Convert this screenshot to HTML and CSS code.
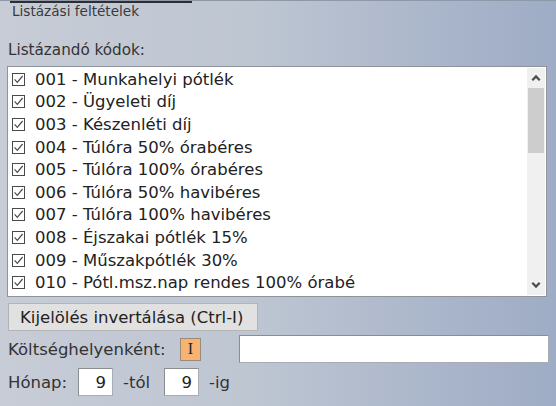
FILE: index.html
```html
<!DOCTYPE html>
<html>
<head>
<meta charset="utf-8">
<link rel="stylesheet" href="styles.css">
</head>
<body>
<div class="panel">
  <div class="tabline"></div>
  <div class="title">Listázási feltételek</div>
  <div class="label">Listázandó kódok:</div>
  <div class="listbox">
    <ul class="items">
      <li><svg class="cb" viewBox="0 0 13 13"><rect x="0.5" y="0.5" width="12" height="12" fill="#fff" stroke="#4a4a4a"/><path d="M2.6 6.4 L5.3 9.4 L10.6 3" fill="none" stroke="#4a4a4a" stroke-width="1.2"/></svg>001 - Munkahelyi pótlék</li>
      <li><svg class="cb" viewBox="0 0 13 13"><rect x="0.5" y="0.5" width="12" height="12" fill="#fff" stroke="#4a4a4a"/><path d="M2.6 6.4 L5.3 9.4 L10.6 3" fill="none" stroke="#4a4a4a" stroke-width="1.2"/></svg>002 - Ügyeleti díj</li>
      <li><svg class="cb" viewBox="0 0 13 13"><rect x="0.5" y="0.5" width="12" height="12" fill="#fff" stroke="#4a4a4a"/><path d="M2.6 6.4 L5.3 9.4 L10.6 3" fill="none" stroke="#4a4a4a" stroke-width="1.2"/></svg>003 - Készenléti díj</li>
      <li><svg class="cb" viewBox="0 0 13 13"><rect x="0.5" y="0.5" width="12" height="12" fill="#fff" stroke="#4a4a4a"/><path d="M2.6 6.4 L5.3 9.4 L10.6 3" fill="none" stroke="#4a4a4a" stroke-width="1.2"/></svg>004 - Túlóra 50% órabéres</li>
      <li><svg class="cb" viewBox="0 0 13 13"><rect x="0.5" y="0.5" width="12" height="12" fill="#fff" stroke="#4a4a4a"/><path d="M2.6 6.4 L5.3 9.4 L10.6 3" fill="none" stroke="#4a4a4a" stroke-width="1.2"/></svg>005 - Túlóra 100% órabéres</li>
      <li><svg class="cb" viewBox="0 0 13 13"><rect x="0.5" y="0.5" width="12" height="12" fill="#fff" stroke="#4a4a4a"/><path d="M2.6 6.4 L5.3 9.4 L10.6 3" fill="none" stroke="#4a4a4a" stroke-width="1.2"/></svg>006 - Túlóra 50% havibéres</li>
      <li><svg class="cb" viewBox="0 0 13 13"><rect x="0.5" y="0.5" width="12" height="12" fill="#fff" stroke="#4a4a4a"/><path d="M2.6 6.4 L5.3 9.4 L10.6 3" fill="none" stroke="#4a4a4a" stroke-width="1.2"/></svg>007 - Túlóra 100% havibéres</li>
      <li><svg class="cb" viewBox="0 0 13 13"><rect x="0.5" y="0.5" width="12" height="12" fill="#fff" stroke="#4a4a4a"/><path d="M2.6 6.4 L5.3 9.4 L10.6 3" fill="none" stroke="#4a4a4a" stroke-width="1.2"/></svg>008 - Éjszakai pótlék 15%</li>
      <li><svg class="cb" viewBox="0 0 13 13"><rect x="0.5" y="0.5" width="12" height="12" fill="#fff" stroke="#4a4a4a"/><path d="M2.6 6.4 L5.3 9.4 L10.6 3" fill="none" stroke="#4a4a4a" stroke-width="1.2"/></svg>009 - Műszakpótlék 30%</li>
      <li><svg class="cb" viewBox="0 0 13 13"><rect x="0.5" y="0.5" width="12" height="12" fill="#fff" stroke="#4a4a4a"/><path d="M2.6 6.4 L5.3 9.4 L10.6 3" fill="none" stroke="#4a4a4a" stroke-width="1.2"/></svg>010 - Pótl.msz.nap rendes 100% órabé</li>
    </ul>
    <div class="scrollbar">
      <div class="arrow"><svg viewBox="0 0 10 8" width="10" height="8"><path d="M1.3 6.2 L5 2.4 L8.7 6.2" fill="none" stroke="#4d4d4d" stroke-width="2.2"/></svg></div>
      <div class="track"><div class="thumb"></div></div>
      <div class="arrow"><svg viewBox="0 0 10 8" width="10" height="8"><path d="M1.3 1.8 L5 5.6 L8.7 1.8" fill="none" stroke="#4d4d4d" stroke-width="2.2"/></svg></div>
    </div>
  </div>
  <div class="btnrow"><button class="btn">Kijelölés invertálása (Ctrl-I)</button></div>
  <div class="row row-cost">
    <span class="lbl cost-lbl">Költséghelyenként:</span>
    <span class="flag">I</span>
    <span class="field wide"></span>
  </div>
  <div class="row row-month">
    <span class="lbl month-lbl">Hónap:</span>
    <span class="field num">9</span>
    <span class="lbl suffix">-tól</span>
    <span class="field num">9</span>
    <span class="lbl suffix">-ig</span>
  </div>
</div>
</body>
</html>
```
FILE: styles.css
```css
html, body {
  margin: 0;
  padding: 0;
}
body {
  width: 556px;
  height: 406px;
  overflow: hidden;
  background: linear-gradient(90deg, #c7ccd6 0%, #bec6d2 45%, #a9b5ca 80%, #9eacc5 100%);
  font-family: "DejaVu Sans", Verdana, sans-serif;
  font-size: 16.5px;
  color: #2b2b2b;
}
.panel {
  border-top: 1px solid #8e98a8;
  height: 405px;
  display: flex;
  flex-direction: column;
}
.tabline {
  margin-left: 10px;
  width: 182px;
  height: 2px;
  background: #2e2e2e;
}
.title {
  margin-left: 12px;
  height: 18px;
  line-height: 17px;
  color: #3a3a3a;
  font-size: 13.6px;
}
.label {
  margin: 20px 0 0 8px;
  line-height: 18px;
  height: 20px;
  color: #333;
  font-size: 15.2px;
}
.listbox {
  margin: 5px 0 0 7px;
  width: 538px;
  height: 229px;
  background: #fff;
  border: 1px solid #8f939a;
  display: flex;
  justify-content: space-between;
}
.items {
  list-style: none;
  margin: 0;
  padding: 1px 0 0 4px;
}
.items li {
  height: 22.6px;
  display: flex;
  align-items: center;
  white-space: nowrap;
  color: #222;
}
.cb {
  width: 13px;
  height: 13px;
  flex: none;
  margin-right: 10px;
}
.scrollbar {
  width: 18px;
  margin: 1px 1px 1px 0;
  background: #f0f0f0;
  display: flex;
  flex-direction: column;
}
.arrow {
  height: 20px;
  display: flex;
  align-items: center;
  justify-content: center;
}
.track {
  flex: 1;
}
.thumb {
  height: 65px;
  background: #cdcdcd;
  margin: 0 1px;
}
.btnrow {
  margin: 6px 0 0 8px;
}
.btn {
  width: 250px;
  height: 28px;
  background: #e1e1e1;
  border: 1px solid #b4b4b4;
  font-family: inherit;
  font-size: 16.5px;
  color: #222;
  text-align: left;
  padding: 0 0 0 11px;
  white-space: nowrap;
}
.row {
  display: flex;
  align-items: center;
  margin-left: 8px;
}
.row-cost {
  margin-top: 4px;
  height: 28px;
}
.row-month {
  margin-top: 5px;
  height: 28px;
}
.lbl {
  color: #333;
  white-space: nowrap;
}
.cost-lbl {
  width: 172px;
}
.month-lbl {
  width: 70px;
}
.flag {
  width: 21px;
  height: 23px;
  box-sizing: border-box;
  background: #f8b271;
  border: 1px solid #9a8a78;
  font-family: "Liberation Serif", serif;
  font-size: 16px;
  display: flex;
  align-items: center;
  justify-content: center;
  color: #222;
}
.field {
  background: #fff;
  box-sizing: border-box;
  border: 1px solid #8a8d92;
  border-right-color: #a9adb3;
  border-bottom-color: #a9adb3;
}
.wide {
  margin-left: 38px;
  width: 310px;
  height: 28px;
}
.num {
  width: 35px;
  height: 28px;
  display: flex;
  align-items: center;
  justify-content: flex-end;
  padding-right: 6px;
  color: #222;
}
.suffix {
  width: 41px;
  padding-left: 10px;
}
```
